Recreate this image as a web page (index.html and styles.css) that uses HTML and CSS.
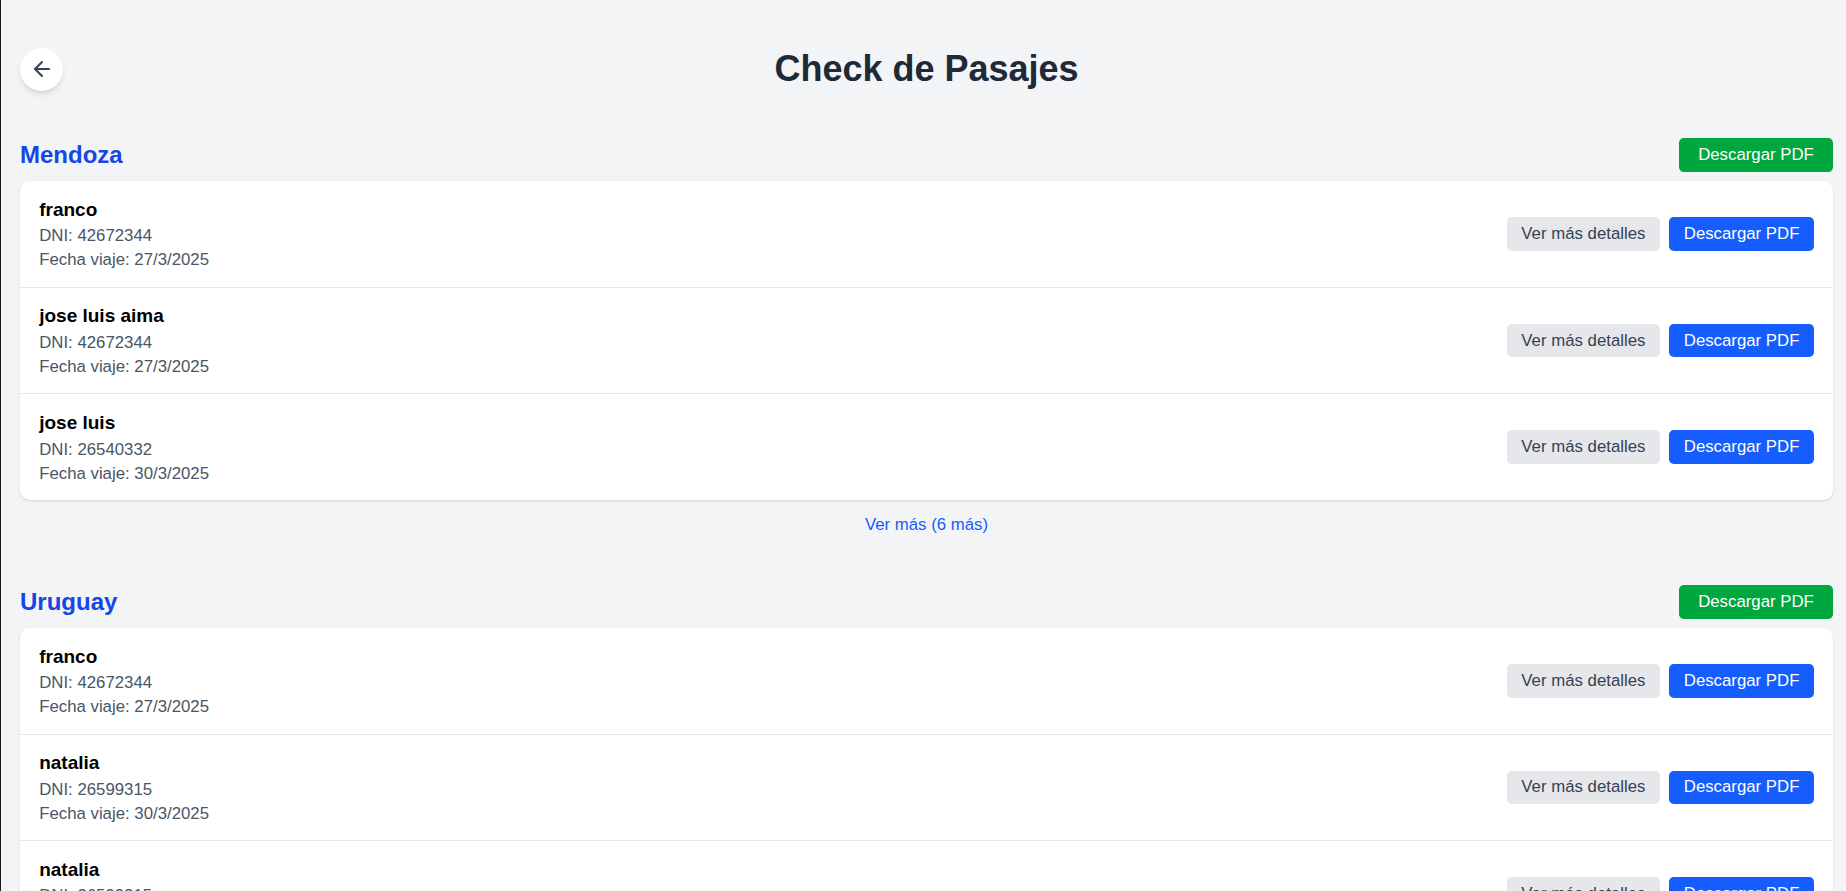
FILE: index.html
```html
<!DOCTYPE html>
<html lang="es">
<head>
<meta charset="utf-8">
<title>Check de Pasajes</title>
<link rel="stylesheet" href="styles.css">
</head>
<body>
<div class="page">
  <header class="header">
    <div class="header-left">
      <button class="back-btn" aria-label="Volver">
        <svg width="24" height="24" viewBox="0 0 24 24" fill="none" stroke="currentColor" stroke-width="2" stroke-linecap="round" stroke-linejoin="round"><path d="m12 19-7-7 7-7"/><path d="M19 12H5"/></svg>
      </button>
    </div>
    <h1 class="title">Check de Pasajes</h1>
    <div></div>
  </header>

  <section class="section">
    <div class="section-head">
      <h2 class="section-title">Mendoza</h2>
      <button class="btn btn-green">Descargar PDF</button>
    </div>
    <div class="card">
      <div class="row">
        <div class="info">
          <div class="name">franco</div>
          <div class="detail">DNI: 42672344</div>
          <div class="detail">Fecha viaje: 27/3/2025</div>
        </div>
        <div class="actions">
          <button class="btn btn-gray">Ver más detalles</button>
          <button class="btn btn-blue">Descargar PDF</button>
        </div>
      </div>
      <div class="row">
        <div class="info">
          <div class="name">jose luis aima</div>
          <div class="detail">DNI: 42672344</div>
          <div class="detail">Fecha viaje: 27/3/2025</div>
        </div>
        <div class="actions">
          <button class="btn btn-gray">Ver más detalles</button>
          <button class="btn btn-blue">Descargar PDF</button>
        </div>
      </div>
      <div class="row">
        <div class="info">
          <div class="name">jose luis</div>
          <div class="detail">DNI: 26540332</div>
          <div class="detail">Fecha viaje: 30/3/2025</div>
        </div>
        <div class="actions">
          <button class="btn btn-gray">Ver más detalles</button>
          <button class="btn btn-blue">Descargar PDF</button>
        </div>
      </div>
    </div>
    <div class="more"><a class="more-link" href="#">Ver más (6 más)</a></div>
  </section>

  <section class="section section-second">
    <div class="section-head">
      <h2 class="section-title">Uruguay</h2>
      <button class="btn btn-green">Descargar PDF</button>
    </div>
    <div class="card">
      <div class="row">
        <div class="info">
          <div class="name">franco</div>
          <div class="detail">DNI: 42672344</div>
          <div class="detail">Fecha viaje: 27/3/2025</div>
        </div>
        <div class="actions">
          <button class="btn btn-gray">Ver más detalles</button>
          <button class="btn btn-blue">Descargar PDF</button>
        </div>
      </div>
      <div class="row">
        <div class="info">
          <div class="name">natalia</div>
          <div class="detail">DNI: 26599315</div>
          <div class="detail">Fecha viaje: 30/3/2025</div>
        </div>
        <div class="actions">
          <button class="btn btn-gray">Ver más detalles</button>
          <button class="btn btn-blue">Descargar PDF</button>
        </div>
      </div>
      <div class="row">
        <div class="info">
          <div class="name">natalia</div>
          <div class="detail">DNI: 26599315</div>
          <div class="detail">Fecha viaje: 30/3/2025</div>
        </div>
        <div class="actions">
          <button class="btn btn-gray">Ver más detalles</button>
          <button class="btn btn-blue">Descargar PDF</button>
        </div>
      </div>
    </div>
  </section>
</div>
</body>
</html>
```

FILE: styles.css
```css
html, body {
  margin: 0;
  padding: 0;
}
body {
  background: #f3f4f6;
  font-family: "Liberation Sans", Arial, sans-serif;
  border-left: 1px solid #1a1a1a;
  min-height: 100vh;
  box-sizing: border-box;
}
.page {
  padding: 45px 13px 40px 19px;
}
.header {
  display: grid;
  grid-template-columns: 1fr auto 1fr;
  align-items: center;
  height: 48px;
  margin-bottom: 45px;
}
.header-left {
  display: flex;
  align-items: center;
}
.back-btn {
  width: 43px;
  height: 43px;
  border-radius: 50%;
  border: none;
  background: #ffffff;
  color: #364153;
  box-shadow: 0 4px 6px -1px rgba(0,0,0,0.1), 0 2px 4px -2px rgba(0,0,0,0.1);
  display: flex;
  align-items: center;
  justify-content: center;
  padding: 0;
  cursor: pointer;
}
.title {
  margin: 0;
  font-size: 36px;
  line-height: 48px;
  font-weight: 700;
  color: #1e2939;
  text-align: center;
}
.section-second {
  margin-top: 48px;
}
.section-head {
  display: flex;
  justify-content: space-between;
  align-items: center;
  margin-bottom: 9.6px;
}
.section-title {
  margin: 0;
  font-size: 24px;
  line-height: 33.6px;
  font-weight: 700;
  color: #1447e6;
}
.card {
  background: #ffffff;
  border-radius: 9.6px;
  box-shadow: 0 1px 3px 0 rgba(0,0,0,0.1), 0 1px 2px -1px rgba(0,0,0,0.1);
  overflow: hidden;
}
.row {
  display: flex;
  justify-content: space-between;
  align-items: center;
  padding: 14.4px 19.2px;
}
.row + .row {
  border-top: 1px solid #e5e7eb;
}
.name {
  font-size: 19px;
  line-height: 28.8px;
  font-weight: 700;
  color: #000000;
}
.detail {
  font-size: 16.8px;
  line-height: 24px;
  color: #4a5565;
}
.actions {
  display: flex;
  gap: 9.6px;
}
.btn {
  font-family: "Liberation Sans", Arial, sans-serif;
  font-size: 16.8px;
  line-height: 24px;
  border: none;
  border-radius: 4.8px;
  padding: 4.8px 14.4px;
  cursor: pointer;
}
.btn-green {
  background: #00a63e;
  color: #ffffff;
  padding: 4.8px 19.2px;
}
.btn-blue {
  background: #155dfc;
  color: #ffffff;
}
.btn-gray {
  background: #e5e7eb;
  color: #364153;
}
.more {
  text-align: center;
  margin-top: 13px;
  font-size: 16.8px;
  line-height: 24px;
}
.more-link {
  color: #155dfc;
  text-decoration: none;
}
```
